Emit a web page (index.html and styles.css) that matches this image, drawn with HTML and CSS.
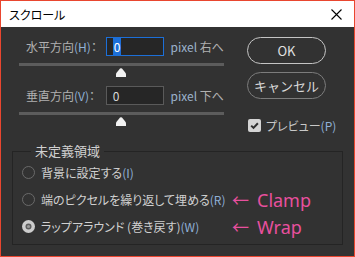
FILE: index.html
```html
<!DOCTYPE html>
<html lang="ja">
<head>
    <meta charset="UTF-8">
    <title>スクロール</title>
    <link rel="stylesheet" href="styles.css">
</head>
<body>
    <div class="window">
        <div class="titlebar">
            <span class="title">スクロール</span>
            <svg class="close" width="11" height="11" viewBox="0 0 11 11">
                <path d="M0.5 0.5 L10.5 10.5 M10.5 0.5 L0.5 10.5" stroke="#000" stroke-width="1.1" fill="none"/>
            </svg>
        </div>

        <div class="content">
            <div class="top">
                <div class="fields">
                    <div class="row">
                        <span class="label">水平方向<span class="key">(H)</span>：</span>
                        <span class="input active"><span class="sel">0</span></span>
                        <span class="unit"><span class="latin">pixel</span> 右へ</span>
                    </div>
                    <div class="slider">
                        <div class="track"></div>
                        <svg class="thumb" width="10" height="9" viewBox="0 0 10 9">
                            <path d="M4 0.6 Q5 -0.2 6 0.6 L9.6 5 Q10 5.6 10 6.5 V9 H0 V6.5 Q0 5.6 0.4 5 Z" fill="#f2f2f2"/>
                        </svg>
                    </div>
                    <div class="row">
                        <span class="label">垂直方向<span class="key">(V)</span>：</span>
                        <span class="input">0</span>
                        <span class="unit"><span class="latin">pixel</span> 下へ</span>
                    </div>
                    <div class="slider">
                        <div class="track"></div>
                        <svg class="thumb" width="10" height="9" viewBox="0 0 10 9">
                            <path d="M4 0.6 Q5 -0.2 6 0.6 L9.6 5 Q10 5.6 10 6.5 V9 H0 V6.5 Q0 5.6 0.4 5 Z" fill="#f2f2f2"/>
                        </svg>
                    </div>
                </div>

                <div class="actions">
                    <button class="btn ok">OK</button>
                    <button class="btn cancel">キャンセル</button>
                    <label class="check">
                        <svg class="box" width="13" height="13" viewBox="0 0 13 13">
                            <rect x="0" y="0" width="13" height="13" rx="2" fill="#d4d4d4"/>
                            <path d="M3.2 6.6 L5.5 8.9 L9.9 4.3" stroke="#2e2e2e" stroke-width="2" fill="none"/>
                        </svg>
                        <span>プレビュー<span class="key">(P)</span></span>
                    </label>
                </div>
            </div>

            <fieldset class="group">
                <legend>未定義領域</legend>
                <div class="option">
                    <svg class="radio" width="13" height="13" viewBox="0 0 13 13">
                        <circle cx="6.5" cy="6.5" r="6" stroke="#6a6a6a" stroke-width="1" fill="none"/>
                    </svg>
                    <span class="text">背景に設定する<span class="key">(I)</span></span>
                </div>
                <div class="option">
                    <svg class="radio" width="13" height="13" viewBox="0 0 13 13">
                        <circle cx="6.5" cy="6.5" r="6" stroke="#6a6a6a" stroke-width="1" fill="none"/>
                    </svg>
                    <span class="text">端のピクセルを繰り返して埋める<span class="key">(R)</span></span>
                    <span class="note"><span class="arrow">←</span>Clamp</span>
                </div>
                <div class="option">
                    <svg class="radio" width="13" height="13" viewBox="0 0 13 13">
                        <circle cx="6.5" cy="6.5" r="6.5" fill="#cdcdcd"/>
                        <circle cx="6.5" cy="6.5" r="3" fill="#5c5c5c"/>
                        <circle cx="6.5" cy="6.5" r="1.6" fill="#9a9a9a"/>
                    </svg>
                    <span class="text">ラップアラウンド (巻き戻す)<span class="key">(W)</span></span>
                    <span class="note"><span class="arrow">←</span>Wrap</span>
                </div>
            </fieldset>
        </div>
    </div>
</body>
</html>
```

FILE: styles.css
```css
body {
    margin: 0;
    font-family: "Noto Sans CJK JP", "Noto Sans", sans-serif;
    font-feature-settings: "palt";
}
.window {
    width: 353px;
    height: 255px;
    border: 1px solid #e9462f;
    background-color: #323232;
    display: flex;
    flex-direction: column;
}
.titlebar {
    height: 30px;
    background-color: #fff;
    display: flex;
    align-items: center;
    justify-content: space-between;
    padding: 0 12px 0 8px;
}
.title {
    font-size: 12px;
    color: #000;
}
.content {
    flex: 1;
    display: flex;
    flex-direction: column;
}
.top {
    display: flex;
    padding: 10px 0 0 18px;
}
.fields {
    width: 205px;
}
.row {
    display: flex;
    align-items: center;
    height: 19px;
    font-size: 12px;
    color: #b0b0b0;
}
.label {
    width: 90px;
    padding-left: 7px;
    box-sizing: border-box;
    white-space: nowrap;
}
.key {
    color: #8fb0d6;
}
.latin {
    color: #9cb2cc;
}
.input {
    width: 60px;
    height: 19px;
    box-sizing: border-box;
    border: 1px solid #5a5a5a;
    background-color: #262626;
    color: #d8d8d8;
    font-size: 12px;
    line-height: 17px;
    padding-left: 6px;
}
.input.active {
    border-color: #1c6fd8;
}
.sel {
    background-color: #1c6fd8;
    color: #fff;
    padding: 0 1px;
}
.unit {
    margin-left: 7px;
    white-space: nowrap;
}
.slider {
    padding-top: 7px;
    height: 23px;
}
.track {
    height: 3px;
    background-color: #5c5c5c;
}
.thumb {
    display: block;
    margin: 2px 0 0 97px;
}
.actions {
    margin-left: 23px;
    width: 79px;
    display: flex;
    flex-direction: column;
}
.btn {
    height: 27px;
    border-radius: 14px;
    background-color: transparent;
    font-family: inherit;
    font-size: 13px;
    padding: 0;
}
.btn.ok {
    border: 1px solid #c4c4c4;
    color: #e0e0e0;
}
.btn.cancel {
    margin-top: 8px;
    border: 1px solid #7c7c7c;
    color: #d8d8d8;
}
.check {
    margin-top: 18px;
    padding-left: 1px;
    display: flex;
    align-items: center;
    gap: 5px;
    font-size: 12px;
    color: #c8c8c8;
    white-space: nowrap;
}
.box {
    flex-shrink: 0;
}
.group {
    margin: 8px 11px 11px 11px;
    padding: 0 0 4px 9px;
    border: 1px solid #242424;
    flex: 1;
}
.group legend {
    margin-left: 9px;
    padding: 0 4px;
    font-size: 13px;
    line-height: 16px;
    color: #d0d0d0;
}
.option {
    display: flex;
    align-items: center;
    height: 27px;
    font-size: 12px;
    color: #d0d0d0;
    white-space: nowrap;
}
.radio {
    margin-right: 6px;
    flex-shrink: 0;
}
.text {
    width: 191px;
}
.note {
    display: flex;
    align-items: center;
    color: #e8509e;
    font-size: 18px;
    font-family: "Noto Sans", sans-serif;
}
.arrow {
    font-family: "Noto Sans CJK JP", sans-serif;
    font-feature-settings: normal;
    font-size: 17px;
    margin-right: 8px;
}
```
